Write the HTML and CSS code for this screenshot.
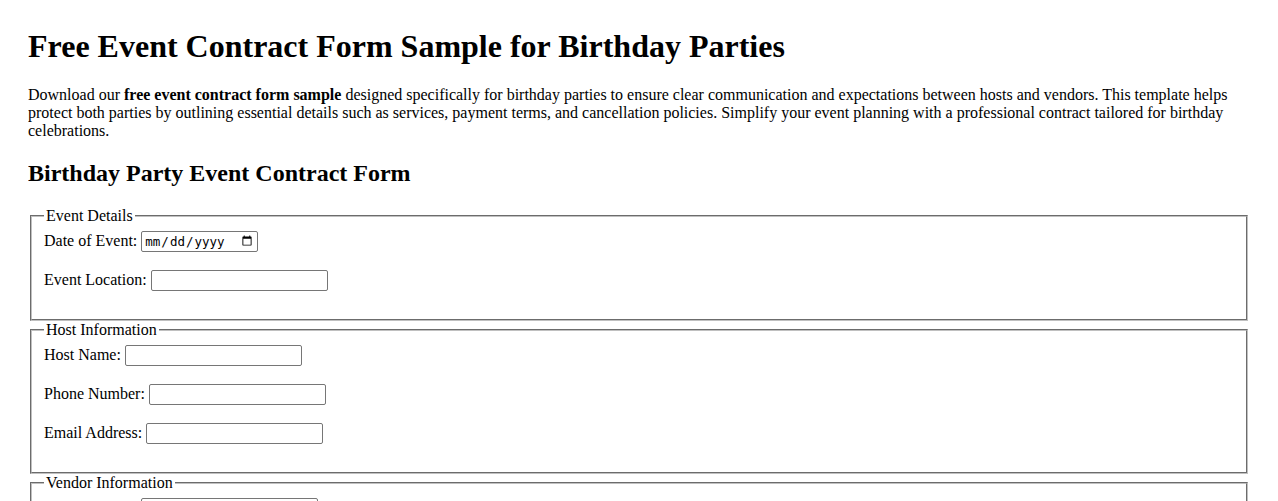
FILE: index.html
```html
<!DOCTYPE html>
<html lang="en">
<head>
<meta charset="utf-8">
<title>Free Event Contract Form Sample for Birthday Parties</title>
<link rel="stylesheet" href="styles.css">
</head>
<body class="page">
<h1 class="title">Free Event Contract Form Sample for Birthday Parties</h1>
<p class="intro">Download our <strong>free event contract form sample</strong> designed specifically for birthday parties to ensure clear communication and expectations between hosts and vendors. This template helps protect both parties by outlining essential details such as services, payment terms, and cancellation policies. Simplify your event planning with a professional contract tailored for birthday celebrations.</p>
<h2 class="subtitle">Birthday Party Event Contract Form</h2>
<form class="contract">
  <fieldset class="group">
    <legend>Event Details</legend>
    <label for="date">Date of Event:</label> <input class="field date" type="date" id="date"><br><br>
    <label for="loc">Event Location:</label> <input class="field" type="text" id="loc"><br><br>
  </fieldset>
  <fieldset class="group">
    <legend>Host Information</legend>
    <label for="hname">Host Name:</label> <input class="field" type="text" id="hname"><br><br>
    <label for="phone">Phone Number:</label> <input class="field" type="tel" id="phone"><br><br>
    <label for="email">Email Address:</label> <input class="field" type="email" id="email"><br><br>
  </fieldset>
  <fieldset class="group">
    <legend>Vendor Information</legend>
    <label for="vname">Vendor Name:</label> <input class="field" type="text" id="vname"><br><br>
    <label for="vphone">Phone Number:</label> <input class="field" type="tel" id="vphone"><br><br>
  </fieldset>
</form>
</body>
</html>
```
FILE: styles.css
```css
html {
  background: #fff;
}
.page {
  margin: 28px;
  font-family: "Liberation Serif", "Times New Roman", serif;
  font-size: 16px;
  color: #000;
}
.title {
  font-size: 32px;
  margin: 0 0 21px;
}
.intro {
  margin: 16px 0;
}
.subtitle {
  font-size: 24px;
  margin: 20px 0;
}
.group {
  margin: 0 2px;
  padding: 6px 12px 10px;
  border: 2px groove #c0c0c0;
}
.group legend {
  padding: 0 2px;
}
.field {
  box-sizing: border-box;
  width: 177px;
  height: 21px;
  border: 1px solid #767676;
  border-radius: 2px;
  padding: 1px 2px;
  font-family: "Liberation Sans", Arial, sans-serif;
  font-size: 13.33px;
  vertical-align: baseline;
}
.field.date {
  width: 117px;
  font-family: "DejaVu Sans Mono", "Liberation Mono", monospace;
  font-size: 12.5px;
}
```
